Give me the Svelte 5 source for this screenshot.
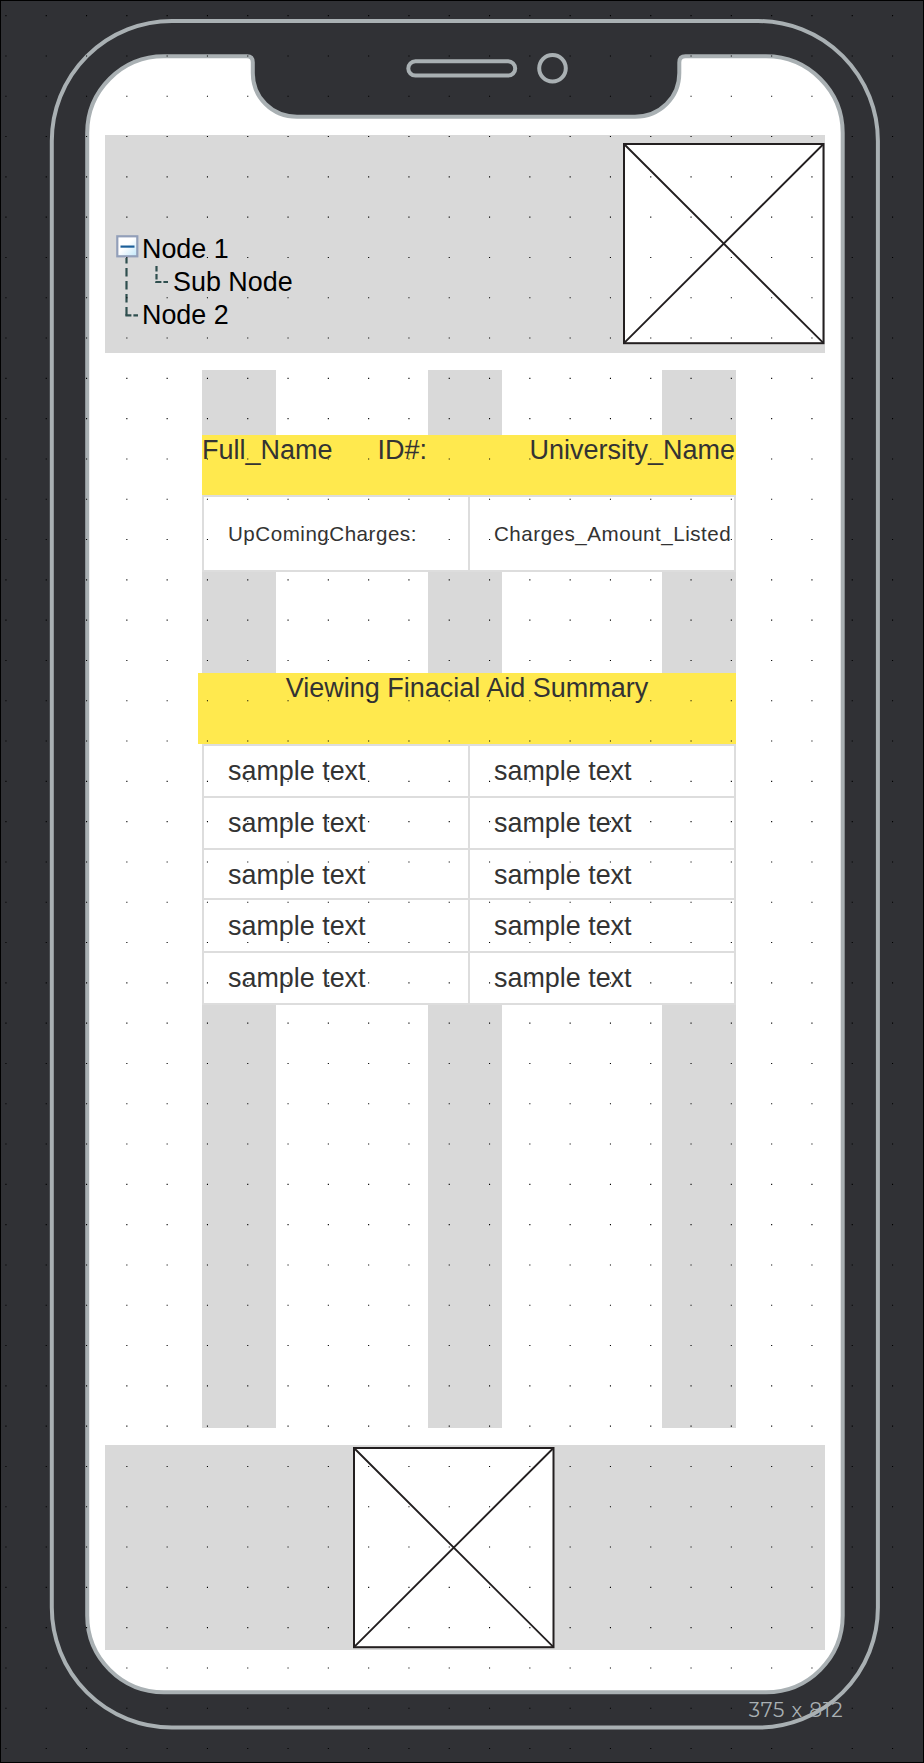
<script>
  const pitch = 40.3;
  let dots = '';
  for (let r = 0; r < 44; r++) {
    for (let c = 0; c < 23; c++) {
      dots += `M${(5.4 + c * pitch).toFixed(2)} ${(15.1 + r * pitch).toFixed(2)}h1.1v1.1h-1.1z`;
    }
  }
  const rows = [
    { h: 52, top: 10 },
    { h: 52, top: 10 },
    { h: 50, top: 10 },
    { h: 53, top: 11 },
    { h: 52, top: 10 }
  ];
</script>

{#snippet placeholder()}
  <svg class="placeholder" viewBox="0 0 202 202">
    <rect x="1" y="1" width="199.5" height="199.2" fill="#fff" stroke="#231f20" stroke-width="2" />
    <path d="M1 1L200.5 200.2M200.5 1L1 200.2" stroke="#231f20" stroke-width="1.9" />
  </svg>
{/snippet}

<div class="board">
  <svg class="layer" viewBox="0 0 924 1763">
    <g stroke="#a9b0b3" stroke-width="4" fill="none">
      <rect x="51.8" y="21" width="826.1" height="1706.6" rx="120" />
      <path fill="#fff" d="M164 56.3H247Q252.8 56.3 252.8 62.5V73C252.8 97.500 272 116.700 297 116.700H635C660 116.700 679.300 97.500 679.300 73V62.500Q679.300 56.300 685.500 56.300H766C808.400 56.300 842.700 90.600 842.700 133V1615.600C842.700 1658 808.400 1692.300 766 1692.300H164C121.600 1692.300 87.200 1658 87.200 1615.600V133C87.200 90.600 121.600 56.300 164 56.300Z" />
      <rect x="408.300" y="61.300" width="106.900" height="14.300" rx="7.150" />
      <circle cx="552.500" cy="68.300" r="13.300" />
    </g>
  </svg>

  <div class="screen">
    <header>
      <div class="tree">
        <svg width="60" height="90" viewBox="0 0 60 90">
          <defs>
            <linearGradient id="knob" x1="0" y1="0" x2="1" y2="1">
              <stop offset="0" stop-color="#fff" />
              <stop offset=".45" stop-color="#fff" />
              <stop offset="1" stop-color="#bfe6fa" />
            </linearGradient>
          </defs>
          <g fill="none" stroke="#2f4f4f" stroke-width="2.200">
            <path d="M11.500 23V81.300" stroke-dasharray="8.500 4.500" stroke-dashoffset="3" />
            <path d="M10.400 80.300H23" stroke-dasharray="6 2" />
            <path d="M41.500 31V48" stroke-dasharray="5.500 2.500" />
            <path d="M40.400 47H53" stroke-dasharray="6 2" />
          </g>
          <rect x="2.300" y="1.300" width="20" height="20" fill="url(#knob)" stroke="#929fb9" stroke-width="2.200" />
          <path d="M5.500 11.600H19.500" stroke="#1c5f99" stroke-width="2.200" />
        </svg>
        <div class="labels">
          <div>Node 1</div>
          <div class="sub">Sub Node</div>
          <div>Node 2</div>
        </div>
      </div>
      <div class="photo">{@render placeholder()}</div>
    </header>

    <main>
      <div class="columns"><i></i><i></i><i></i></div>
      <div class="content">
        <div class="banner names">
          <span>Full_Name</span><span class="id">ID#:</span><span class="uni">University_Name</span>
        </div>
        <div class="table charges">
          <div class="row">
            <div class="cell">UpComingCharges:</div>
            <div class="cell">Charges_Amount_Listed</div>
          </div>
        </div>
        <div class="banner summary">Viewing Finacial Aid Summary</div>
        <div class="table">
          {#each rows as row}
            <div class="row" style="height:{row.h}px">
              <div class="cell" style="padding-top:{row.top}px">sample text</div>
              <div class="cell" style="padding-top:{row.top}px">sample text</div>
            </div>
          {/each}
        </div>
      </div>
    </main>

    <footer>{@render placeholder()}</footer>
    <div class="size">375 x 812</div>
  </div>

  <svg class="layer top" viewBox="0 0 924 1763"><path d={dots} fill="#000" /></svg>
</div>

<style>
  :global(body) { margin: 0; }
  .board {
    position: relative;
    box-sizing: border-box;
    width: 924px;
    height: 1763px;
    overflow: hidden;
    background: #303135;
    border: 1px solid #000;
    font: 26.900px/31px "Liberation Sans", Arial, sans-serif;
    color: #333;
  }
  .layer { position: absolute; left: -1px; top: -1px; width: 924px; height: 1763px; }
  .top { pointer-events: none; }
  .screen {
    position: relative;
    display: flex;
    flex-direction: column;
    padding: 134px 98.300px 0 104px;
  }
  header {
    display: flex;
    justify-content: space-between;
    height: 217.600px;
    background: #d9d9d9;
    color: #000;
  }
  .tree { display: flex; padding: 100px 0 0 10px; }
  .tree svg { flex: none; margin-right: -33px; }
  .labels { line-height: 33px; margin-top: -2px; white-space: nowrap; }
  .sub { padding-left: 31px; }
  .photo { padding-top: 8px; width: 201.700px; }
  .placeholder { display: block; width: 202px; height: 202px; }
  main { display: grid; height: 1058px; margin: 17.700px 88.700px 0 97px; }
  .columns, .content { grid-area: 1 / 1; }
  .columns { display: flex; justify-content: space-between; }
  .columns i { width: 74.400px; background: #d9d9d9; }
  .columns i:nth-child(2) { margin-left: 8px; margin-right: 16px; }
  .content { padding-top: 64.700px; width: 534px; }
  .banner { background: #ffe94e; white-space: nowrap; font-size: 27px; }
  .names { display: flex; height: 60.500px; line-height: 31px; }
  .id { margin-left: 45px; }
  .uni { margin: 0 1px 0 auto; }
  .summary { height: 71px; margin: 101px 0 0 -4px; text-align: center; line-height: 31px; }
  .table { background: #fff; border: solid #ddd; border-width: 0 2px 2px 0; }
  .row { display: flex; box-sizing: border-box; }
  .cell {
    box-sizing: border-box;
    width: 266px;
    border: solid #ddd;
    border-width: 2px 0 0 2px;
    padding-left: 24px;
    white-space: nowrap;
  }
  .charges .row { height: 74.500px; font-size: 20.600px; line-height: 74px; letter-spacing: .500px; }
  footer {
    height: 205.300px;
    margin-top: 16.400px;
    padding: 2px 0 0 248px;
    box-sizing: border-box;
    background: #d9d9d9;
  }
  .size {
    align-self: flex-end;
    margin: 48.500px -18.800px 0 0;
    font: 20px/24px Montserrat, Inter, sans-serif;
    letter-spacing: .950px;
    color: #a9b0b3;
    white-space: nowrap;
  }
</style>
